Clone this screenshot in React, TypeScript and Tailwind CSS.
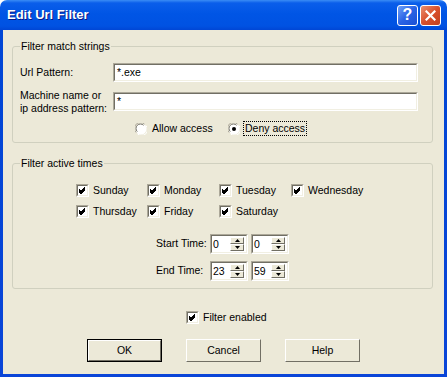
import React from "react";

const days = [
 ["Sunday", "Monday", "Tuesday", "Wednesday"],
 ["Thursday", "Friday", "Saturday"],
];

function Sunken({ className = "", children }: { className?: string; children?: React.ReactNode }) {
 return (
  <div className={`border border-[#ACA899] border-b-white border-r-white ${className}`}>
   <div className="h-full w-full border border-[#716F64] border-b-[#F1EFE2] border-r-[#F1EFE2] bg-white">
    {children}
   </div>
  </div>
 );
}

function Check({ label }: { label?: string }) {
 return (
  <div className="flex h-[13px] items-center gap-[4px]">
   <Sunken className="h-[13px] w-[13px] shrink-0">
    <svg width="9" height="9" viewBox="0 0 9 9" className="block">
     <path d="M1 3.5 L3 5.5 L7 1.5 M1 4.5 L3 6.5 L7 2.5 M1 5.5 L3 7.5 L7 3.5" stroke="#000" strokeWidth="1" fill="none" shapeRendering="crispEdges" />
    </svg>
   </Sunken>
   {label && <span className="leading-[13px]">{label}</span>}
  </div>
 );
}

function Radio({ checked }: { checked?: boolean }) {
 return (
  <svg width="12" height="12" viewBox="0 0 12 12" className="shrink-0">
   <circle cx="6" cy="6" r="5.5" fill="#fff" />
   <path d="M1.2 9.5 A5.5 5.5 0 0 1 9.5 1.2" stroke="#ACA899" strokeWidth="1" fill="none" />
   <path d="M2.3 8.6 A4.3 4.3 0 0 1 8.6 2.3" stroke="#716F64" strokeWidth="1" fill="none" />
   <path d="M10.8 2.5 A5.5 5.5 0 0 1 2.5 10.8" stroke="#fff" strokeWidth="1" fill="none" />
   {checked && <circle cx="6" cy="6" r="2" fill="#000" />}
  </svg>
 );
}

function Spin({ value }: { value: string }) {
 return (
  <Sunken className="h-[20px] w-[38px]">
   <div className="flex h-full items-center">
    <span className="flex-1 pl-[1px] leading-[16px]">{value}</span>
    <div className="mr-[2px] flex h-[14px] w-[14px] flex-col">
     {["up", "down"].map((d) => (
      <div
       key={d}
       className="flex h-[7px] items-center justify-center border border-white border-b-[#716F64] border-r-[#716F64] bg-[#ECE9D8]"
      >
       <svg width="5" height="3" viewBox="0 0 5 3" className="block">
        {d === "up" ? <path d="M2.5 0 L5 3 L0 3 Z" fill="#000" /> : <path d="M0 0 L5 0 L2.5 3 Z" fill="#000" />}
       </svg>
      </div>
     ))}
    </div>
   </div>
  </Sunken>
 );
}

function Button({ label, isDefault }: { label: string; isDefault?: boolean }) {
 return (
  <div className={`h-[23px] w-[75px] ${isDefault ? "border border-black" : ""}`}>
   <div className="flex h-full w-full items-center justify-center border border-white border-b-[#716F64] border-r-[#716F64] bg-[#ECE9D8]">
    {label}
   </div>
  </div>
 );
}

function Group({ title, className = "", children }: { title: string; className?: string; children?: React.ReactNode }) {
 return (
  <div className={`relative ml-[9px] w-[421px] rounded-[3px] border border-[#D0D0BF] ${className}`}>
   <span className="absolute left-[7px] top-[-7px] bg-[#ECE9D8] px-[1px] leading-[13px]">{title}</span>
   {children}
  </div>
 );
}

export default function App() {
 return (
  <div className="h-[377px] w-[447px] bg-white font-['Liberation_Sans',Arial,sans-serif] text-[10.5px] text-black">
   <div className="flex h-full flex-col rounded-t-[7px] bg-[linear-gradient(to_bottom,#3A8CF5_0px,#0A5EEA_3px,#0055E5_14px,#0052E2_26px,#0046D5_30px,#0A45D8_100%)]">
    {/* title bar */}
    <div className="flex h-[30px] items-center pl-[7px] pr-[6px]">
     <span className="flex-1 text-[13px] font-bold text-white [text-shadow:1px_1px_0_#0A1883]">Edit Url Filter</span>
     <div className="flex h-[21px] w-[21px] items-center justify-center rounded-[3px] border border-white bg-[linear-gradient(135deg,#6FA1F8,#2A63E5_50%,#1B4FD4)] text-[16px] font-bold leading-none text-white">
      ?
     </div>
     <div className="ml-[2px] flex h-[21px] w-[21px] items-center justify-center rounded-[3px] border border-white bg-[linear-gradient(135deg,#E9906F,#D9502C_50%,#C2401E)]">
      <svg width="11" height="11" viewBox="0 0 11 11">
       <path d="M1.5 1.5 L9.5 9.5 M9.5 1.5 L1.5 9.5" stroke="#fff" strokeWidth="2.2" strokeLinecap="square" />
      </svg>
     </div>
    </div>

    {/* client area */}
    <div className="mx-[3px] mb-[3px] flex-1 bg-[#ECE9D8] pt-[16px]">
     <Group title="Filter match strings" className="h-[97px]">
      <div className="mt-[16px] flex h-[19px] items-center pl-[7px]">
       <span className="w-[93px]">Url Pattern:</span>
       <Sunken className="h-[19px] w-[305px]">
        <span className="block pl-[2px] leading-[15px]">*.exe</span>
       </Sunken>
      </div>
      <div className="mt-[10px] flex h-[19px] items-center pl-[7px]">
       <span className="w-[93px] leading-[13px]">
        Machine name or
        <br />
        ip address pattern:
       </span>
       <Sunken className="h-[19px] w-[305px]">
        <span className="block pl-[2px] leading-[15px]">*</span>
       </Sunken>
      </div>
      <div className="mt-[11px] flex h-[13px] items-center pl-[122px]">
       <div className="flex w-[93px] items-center gap-[5px]">
        <Radio />
        <span>Allow access</span>
       </div>
       <div className="flex items-center gap-[3px]">
        <Radio checked />
        <span className="border border-dotted border-black px-[1px] leading-[13px]">Deny access</span>
       </div>
      </div>
     </Group>

     <Group title="Filter active times" className="mt-[20px] h-[126px]">
      <div className="mt-[20px] flex flex-col gap-[8px] pl-[63px]">
       {days.map((row, i) => (
        <div key={i} className="grid grid-cols-[71px_72px_72px_auto]">
         {row.map((d) => (
          <Check key={d} label={d} />
         ))}
        </div>
       ))}
      </div>
      <div className="mt-[16px] flex flex-col gap-[7px] pl-[143px]">
       {[
        ["Start Time:", "0", "0"],
        ["End Time:", "23", "59"],
       ].map(([label, h, m]) => (
        <div key={label} className="flex items-center">
         <span className="w-[54px]">{label}</span>
         <Spin value={h} />
         <div className="w-[3px]" />
         <Spin value={m} />
        </div>
       ))}
      </div>
     </Group>

     <div className="mt-[22px] pl-[183px]">
      <Check label="Filter enabled" />
     </div>

     <div className="mt-[15px] flex gap-[24px] pl-[84px]">
      <Button label="OK" isDefault />
      <Button label="Cancel" />
      <Button label="Help" />
     </div>
    </div>
   </div>
  </div>
 );
}
